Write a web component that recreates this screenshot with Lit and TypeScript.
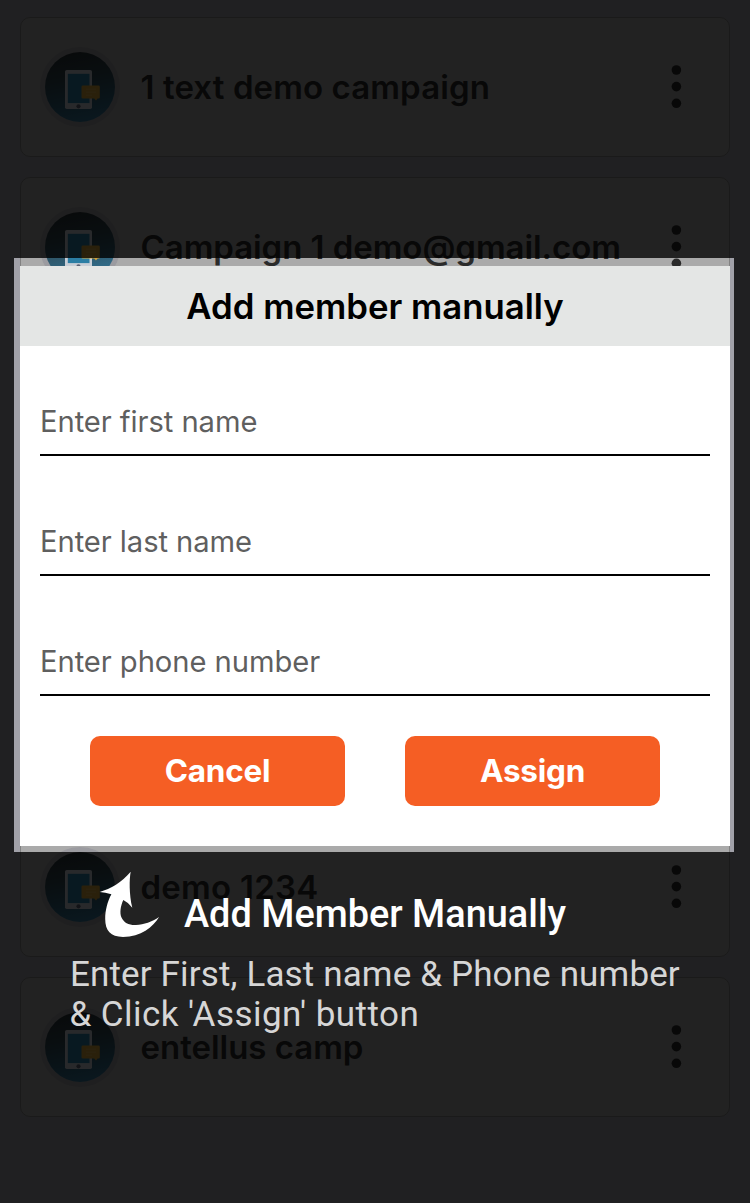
import { LitElement, html, css, svg } from "lit";
import { customElement, property } from "lit/decorators.js";

@customElement("campaign-card")
class CampaignCard extends LitElement {
  @property() label = "";
  @property({ type: Number }) tracking = 0;

  static styles = css`
    :host {
      display: flex;
      align-items: center;
      box-sizing: border-box;
      height: 140px;
      flex: none;
      padding: 0 47px 0 19px;
      border: 1px solid #828282;
      border-radius: 10px;
      background: #aaaaaa;
      color: #2b2b2b;
      font: 600 33px/40px Inter, sans-serif;
    }
    .badge, .dots { display: block; flex: none; }
    .label { flex: 1; margin-left: 20.5px; white-space: nowrap; }
  `;

  render() {
    return html`
      <svg class="badge" width="80" height="80" viewBox="0 0 80 80">
        <defs>
          <linearGradient id="sea" x1="0.4" y1="0" x2="0.6" y2="1">
            <stop offset="0" stop-color="#2b3438" />
            <stop offset="0.35" stop-color="#2f4650" />
            <stop offset="0.7" stop-color="#2f6078" />
            <stop offset="1" stop-color="#34789a" />
          </linearGradient>
        </defs>
        <circle cx="40" cy="40" r="40" fill="#9b9ba0" />
        <circle cx="40" cy="40" r="35" fill="url(#sea)" />
        <rect x="25" y="23" width="27" height="39" rx="1.8" fill="#c8ced6" />
        <rect x="27.8" y="26.8" width="21.7" height="29.3" fill="#2b7ea4" />
        <circle cx="38.5" cy="59.3" r="2.1" fill="#5b6274" />
        <path d="M42.800 38.600H58.500Q59.800 38.600 59.800 39.900V50.300Q59.800 51.500 58.500 51.500H57.600L56 53.600L54.200 51.500H42.800Q41.500 51.500 41.500 50.300V39.900Q41.500 38.600 42.800 38.600Z" fill="#d0a038" />
        <path d="M46 42.200H56M46 45.200H56M46 48.200H52" stroke="#dcb460" stroke-width="0.8" />
      </svg>
      <span class="label" style="letter-spacing:${this.tracking}px">${this.label}</span>
      <svg class="dots" width="12" height="44" viewBox="0 0 12 44">
        ${[5, 21.6, 38.3].map((y) => svg`<circle cx="6.4" cy=${y} r="4.8" fill="#2a2a2a" />`)}
      </svg>
    `;
  }
}

@customElement("add-member-dialog")
class AddMemberDialog extends LitElement {
  static styles = css`
    :host {
      display: flex;
      flex-direction: column;
      background: #fff;
      font-family: Inter, sans-serif;
    }
    h2 {
      margin: 0;
      height: 80px;
      background: #e4e6e5;
      color: #000;
      font: 600 34.74px/80px Inter, sans-serif;
      text-align: center;
    }
    .fields {
      display: flex;
      flex-direction: column;
      gap: 50px;
      padding: 40px 20px 0;
    }
    .field {
      box-sizing: border-box;
      height: 70px;
      border-bottom: 2px solid #000;
      padding-top: 16px;
      font-size: 29.2px;
      letter-spacing: -0.07px;
      line-height: 40px;
      color: #5f5f5f;
      white-space: nowrap;
    }
    .actions {
      display: flex;
      justify-content: center;
      gap: 60px;
      padding-top: 40px;
    }
    button {
      width: 255px;
      height: 70px;
      padding: 0;
      border: 0;
      border-radius: 10px;
      background: #f55e24;
      color: #fff;
      font: 700 31.5px/70px Inter, sans-serif;
      letter-spacing: -0.25px;
    }
  `;

  render() {
    return html`
      <h2>Add member manually</h2>
      <div class="fields">
        ${["Enter first name", "Enter last name", "Enter phone number"].map(
          (hint) => html`<div class="field">${hint}</div>`
        )}
      </div>
      <div class="actions">
        <button>Cancel</button>
        <button>Assign</button>
      </div>
    `;
  }
}

@customElement("app-root")
class AppRoot extends LitElement {
  static styles = css`
    :host {
      display: block;
      position: relative;
      width: 750px;
      height: 1203px;
      overflow: hidden;
      background: #a1a1a9;
    }
    .list {
      display: flex;
      flex-direction: column;
      gap: 20px;
      padding: 17px 20px 0;
    }
    .dialog {
      position: absolute;
      left: 20px;
      top: 266px;
      width: 710px;
      height: 580px;
    }
    .spotlight {
      position: absolute;
      left: 14px;
      top: 258px;
      width: 720px;
      height: 594px;
      box-shadow: 0 0 0 1300px rgba(0, 0, 0, 0.8);
      pointer-events: none;
    }
    .coach {
      position: absolute;
      left: 69px;
      top: 871px;
      display: flex;
      flex-direction: column;
      gap: 17px;
      font-family: Roboto, sans-serif;
      white-space: nowrap;
    }
    .heading {
      display: flex;
      align-items: flex-start;
      height: 67px;
      padding-left: 30px;
    }
    .heading svg { display: block; flex: none; }
    h3 {
      margin: 23px 0 0 24px;
      font-size: 37.9px;
      font-weight: 500;
      line-height: 40px;
      color: #fff;
    }
    p {
      margin: 0;
      font-size: 35px;
      line-height: 40px;
      color: #d6d6d6;
    }
    .line { display: block; padding-left: 1px; letter-spacing: 0.14px; }
    .line.loose { padding-left: 0.5px; letter-spacing: 0.45px; }
  `;

  private campaigns: [string, number][] = [
    ["1 text demo campaign", 0.1],
    ["Campaign 1 demo@gmail.com", -0.06],
    ["", 0],
    ["", 0],
    ["", 0],
    ["demo 1234", 0.25],
    ["entellus camp", -0.03],
  ];

  render() {
    return html`
      <div class="list">
        ${this.campaigns.map(
          ([name, tracking]) => html`<campaign-card .label=${name} .tracking=${tracking}></campaign-card>`
        )}
      </div>
      <add-member-dialog class="dialog"></add-member-dialog>
      <div class="spotlight"></div>
      <div class="coach">
        <div class="heading">
          <svg width="61" height="67" viewBox="0 0 61 67">
            <path fill="#fff" d="M31.7 0.7C30.3 8 30 23 33.3 36.8Q29.5 31.5 24.3 29C21.5 35 20.5 42 22.5 46.5C25 52 30 54.3 37 54C45 53.6 53 50.5 60.1 45.9C54 56 42 65.8 24 65.9C11.5 65.9 6.2 59.5 6.2 48C6.2 39.5 8.4 30.5 12.4 23.2Q6 21.4 0.7 21C12 17.5 22.5 11.5 31.7 0.7Z" />
          </svg>
          <h3>Add Member Manually</h3>
        </div>
        <p>
          <span class="line">Enter First, Last name &amp; Phone number</span>
          <span class="line loose">&amp; Click 'Assign' button</span>
        </p>
      </div>
    `;
  }
}
